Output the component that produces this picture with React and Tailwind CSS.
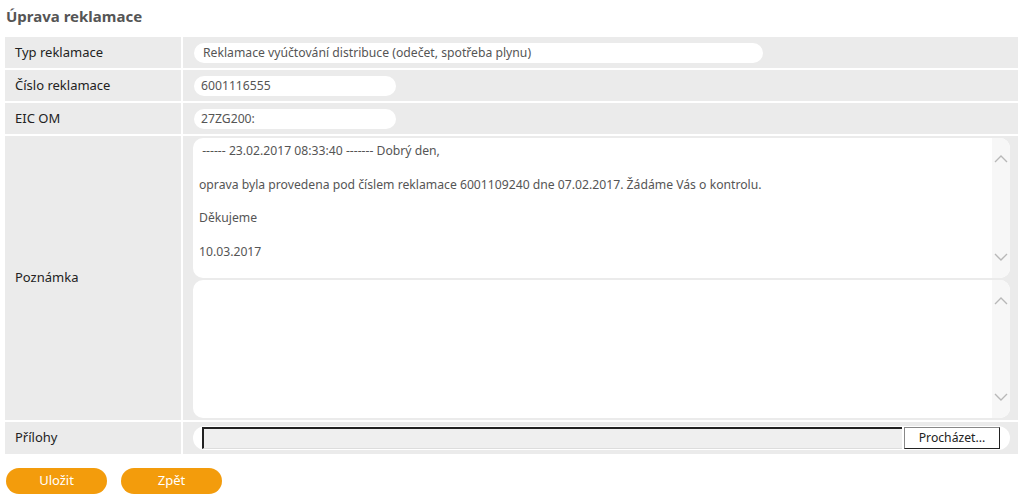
import React from 'react';

const font = { fontFamily: '"Noto Sans", "Open Sans", sans-serif' };

const Chevron = ({ up }) => (
  <svg width="14" height="9" viewBox="0 0 14 9" className="text-[#b8b8b8]">
    <path d={up ? 'M1 8 L7 2 L13 8' : 'M1 1 L7 7 L13 1'} fill="none" stroke="currentColor" strokeWidth="1.4" />
  </svg>
);

const Row = ({ label, children, className = 'h-[33px]' }) => (
  <div className={`flex ${className} border-b-2 border-white last:border-b-0`}>
    <div className="w-[178px] shrink-0 flex items-center pl-[10px] text-[13px] text-[#222] border-r-2 border-white">
      {label}
    </div>
    <div className="flex-1 flex items-center pl-[11px] pr-[8px]">{children}</div>
  </div>
);

const TextArea = ({ h, children }) => (
  <div className={`flex ${h} bg-white rounded-[10px] overflow-hidden`}>
    <div className="flex-1 px-[6px] pt-[4px] text-[12.2px] text-[#555] leading-[17px]">{children}</div>
    <div className="w-[18px] bg-[#f7f7f7] flex flex-col items-center justify-between py-[16px]">
      <Chevron up />
      <Chevron />
    </div>
  </div>
);

export default function App() {
  return (
    <div className="bg-white w-[1022px] h-[499px] pt-[5px]" style={font}>
      <h1 className="pl-[6px] text-[15px] font-bold text-[#555] h-[32px] leading-[22px]">Úprava reklamace</h1>
      <div className="mx-[5px] bg-[#ebebeb] w-[1013px]">
        <Row label="Typ reklamace">
          <div className="w-[569px] h-[20px] bg-white rounded-[10px] px-[9px] text-[12.2px] text-[#555] leading-[20px]">
            Reklamace vyúčtování distribuce (odečet, spotřeba plynu)
          </div>
        </Row>
        <Row label="Číslo reklamace">
          <div className="w-[202px] h-[20px] bg-white rounded-[10px] px-[7px] text-[12.2px] text-[#555] leading-[20px]">
            6001116555
          </div>
        </Row>
        <Row label="EIC OM">
          <div className="w-[202px] h-[20px] bg-white rounded-[10px] px-[7px] text-[12.2px] text-[#555] leading-[20px]">
            27ZG200:
          </div>
        </Row>
        <Row label="Poznámka" className="h-[286px] items-stretch">
          <div className="flex-1 flex flex-col gap-[2px] py-[2px] pl-[-2px] -ml-[1px]">
            <TextArea h="h-[140px]">
              <p className="mb-[16.5px]">&nbsp;------ 23.02.2017 08:33:40 ------- Dobrý den,</p>
              <p className="mb-[16.5px]">oprava byla provedena pod číslem reklamace 6001109240 dne 07.02.2017. Žádáme Vás o kontrolu.</p>
              <p className="mb-[16.5px]">Děkujeme</p>
              <p>10.03.2017</p>
            </TextArea>
            <TextArea h="h-[138px]" />
          </div>
        </Row>
        <Row label="Přílohy" className="h-[32px]">
          <div className="flex-1 -ml-[1px] h-[24px] bg-white rounded-[12px] flex items-center pl-[9px] pr-[10px]">
            <div className="flex-1 h-[22px] bg-[#efefef] border-t-2 border-l-2 border-[#222] border-b border-b-[#ddd]"></div>
            <div className="w-[96px] h-[22px] ml-[2px] bg-white border border-[#888] border-b-[#222] border-r-[#222] text-[12.2px] text-[#222] flex items-center justify-center">
              Procházet...
            </div>
          </div>
        </Row>
      </div>
      <div className="flex gap-[14px] pl-[6px] mt-[14px]">
        <button className="w-[101px] h-[26px] rounded-[13px] bg-[#f39c0c] text-white text-[13px]">Uložit</button>
        <button className="w-[101px] h-[26px] rounded-[13px] bg-[#f39c0c] text-white text-[13px]">Zpět</button>
      </div>
    </div>
  );
}
